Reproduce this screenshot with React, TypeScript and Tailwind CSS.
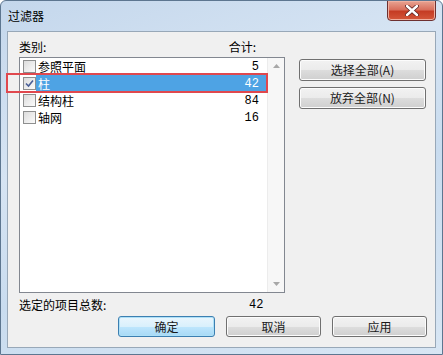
import { useState } from 'react'

type Row = { name: string; count: number; checked: boolean }

const rows: Row[] = [
  { name: '参照平面', count: 5, checked: false },
  { name: '柱', count: 42, checked: true },
  { name: '结构柱', count: 84, checked: false },
  { name: '轴网', count: 16, checked: false }
]

const font = 'font-["SimSun","Noto_Sans_CJK_SC",sans-serif]'

const Button = ({ label, focused = false, className = '' }: { label: string; focused?: boolean; className?: string }) => (
  <div
    className={`flex items-center justify-center rounded-[3px] border text-[12px] text-[#1a1a1a] ${
      focused
        ? 'border-[#3c7fb1] bg-[linear-gradient(#eaf6fd_0%,#d9f0fc_50%,#bee6fd_51%,#a7d9f5_100%)] shadow-[inset_0_0_0_1px_#aee0f7]'
        : 'border-[#707070] bg-[linear-gradient(#f2f2f2_0%,#ebebeb_50%,#dddddd_51%,#cfcfcf_100%)] shadow-[inset_0_0_0_1px_#fcfcfc]'
    } ${className}`}
  >
    {label}
  </div>
)

const Checkbox = ({ checked }: { checked: boolean }) => (
  <div className="flex h-[13px] w-[13px] shrink-0 items-center justify-center border border-[#8e8f8f] bg-[linear-gradient(135deg,#dcdcdc,#fbfbfb)]">
    {checked && (
      <svg width="9" height="9" viewBox="0 0 9 9">
        <path d="M1 4.5 L3.5 7 L8 1.5" fill="none" stroke="#4a5f97" strokeWidth="1.6" />
      </svg>
    )}
  </div>
)

export default function App() {
  const [selected] = useState(1)

  return (
    <div className={`${font} flex h-[355px] w-[443px] flex-col overflow-hidden rounded-t-[6px] border border-[#5d7690] bg-[linear-gradient(160deg,#c4d7ec_0%,#d6e4f3_35%,#c9dcef_60%,#d8e6f4_100%)]`}>
      {/* title bar */}
      <div className="relative flex h-[30px] shrink-0 items-center pl-[7px] text-[12px] text-black">
        过滤器
        <div className="absolute right-[6px] top-[-1px] flex h-[21px] w-[49px] items-center justify-center rounded-b-[4px] border border-[#6d3030] bg-[linear-gradient(#e8a493_0%,#d9705d_45%,#c53c24_55%,#d4573a_100%)] shadow-[inset_0_0_0_1px_#f0b0a0]">
          <svg width="14" height="11" viewBox="0 0 14 11">
            <path d="M2 1 L12 10 M12 1 L2 10" stroke="#5a2020" strokeWidth="4" strokeLinecap="round" />
            <path d="M2 1 L12 10 M12 1 L2 10" stroke="#ffffff" strokeWidth="2.4" strokeLinecap="round" />
          </svg>
        </div>
      </div>

      {/* client area */}
      <div className="mx-[6px] mb-[6px] flex flex-1 flex-col border border-[#98a8b8] bg-[#f0f0f0] pl-[11px] text-[12px] text-black">
        <div className="flex h-[25px] w-[265px] items-center justify-between pt-[5px] pr-[28px]">
          <span>类别:</span>
          <span>合计:</span>
        </div>

        <div className="flex gap-[14px]">
          {/* list */}
          <div className="relative flex h-[236px] w-[266px] border border-[#828790] bg-white">
            <div className="flex flex-1 flex-col">
              {rows.map((r, i) => (
                <div key={r.name} className="flex h-[17px] items-center pl-[3px]">
                  <Checkbox checked={r.checked} />
                  <div
                    className={`flex h-[17px] flex-1 items-center justify-between pl-[2px] pr-[8px] ${
                      i === selected ? 'bg-[#4ea3e4] text-white' : ''
                    }`}
                  >
                    <span>{r.name}</span>
                    <span className='font-["Liberation_Mono",monospace]'>{r.count}</span>
                  </div>
                </div>
              ))}
            </div>
            {/* scrollbar */}
            <div className="flex w-[17px] flex-col items-center justify-between border-l border-[#ececec] bg-[#f7f7f7] py-[6px]">
              <svg width="7" height="4" viewBox="0 0 7 4">
                <path d="M0 4 L3.5 0 L7 4 Z" fill="#a8a8a8" />
              </svg>
              <svg width="7" height="4" viewBox="0 0 7 4">
                <path d="M0 0 L3.5 4 L7 0 Z" fill="#a8a8a8" />
              </svg>
            </div>
            {/* red highlight box */}
            <div className="pointer-events-none absolute left-[-14px] top-[15px] h-[20px] w-[262px] border-2 border-[#e0484e]" />
          </div>

          {/* side buttons */}
          <div className="flex flex-col gap-[6px] pt-[2px]">
            <Button label="选择全部(A)" className="h-[22px] w-[127px]" />
            <Button label="放弃全部(N)" className="h-[22px] w-[127px]" />
          </div>
        </div>

        <div className="flex h-[21px] w-[265px] items-center pt-[2px]">
          <span className="w-[230px]">选定的项目总数:</span>
          <span className='font-["Liberation_Mono",monospace]'>42</span>
        </div>

        <div className="flex gap-[11px] pl-[99px] pt-[2px]">
          <Button label="确定" focused className="h-[21px] w-[97px]" />
          <Button label="取消" className="h-[21px] w-[95px]" />
          <Button label="应用" className="h-[21px] w-[95px]" />
        </div>
      </div>
    </div>
  )
}
